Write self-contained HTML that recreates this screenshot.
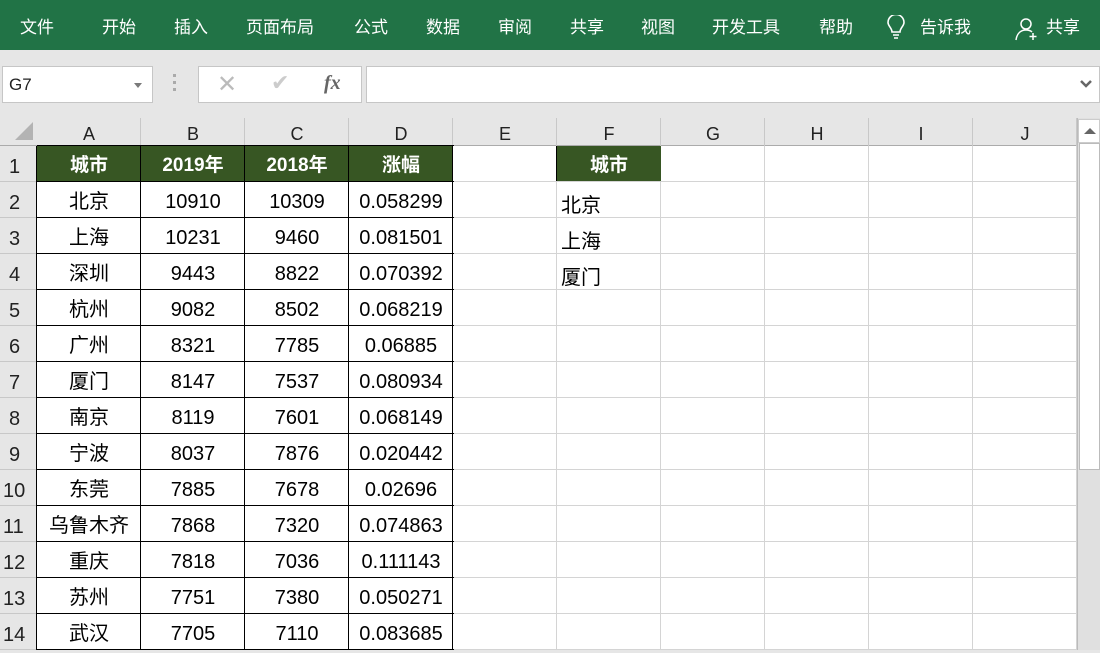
<!DOCTYPE html>
<html><head><meta charset="utf-8"><style>
*{margin:0;padding:0;box-sizing:border-box}
body{width:1100px;height:650px;overflow:hidden;background:#e6e6e6;font-family:"Liberation Sans","Noto Sans CJK SC",sans-serif;position:relative}
.rib{position:absolute;left:0;top:0;width:1100px;height:50px;background:#217346;color:#fff;font-size:17px}
.rib span{position:absolute;top:16px;line-height:24px}
.box{position:absolute;background:#fff;border:1px solid #c6c6c6}
.c{position:absolute;overflow:hidden;white-space:nowrap;font-size:20px;color:#000;height:36px;line-height:36px}
</style></head><body>
<div class="rib">
<span style="left:20px">文件</span><span style="left:102px">开始</span><span style="left:174px">插入</span><span style="left:246px">页面布局</span><span style="left:354px">公式</span><span style="left:426px">数据</span><span style="left:498px">审阅</span><span style="left:570px">共享</span><span style="left:641px">视图</span><span style="left:712px">开发工具</span><span style="left:819px">帮助</span>
<svg style="position:absolute;left:886px;top:15px" width="20" height="26" viewBox="0 0 20 26" fill="none" stroke="#fff" stroke-width="1.6"><path d="M6 17 C6 13 2 11 2 7.5 A8 8 0 0 1 18 7.5 C18 11 14 13 14 17 Z"/><path d="M7 20h6M8 23h4"/></svg>
<span style="left:920px">告诉我</span>
<svg style="position:absolute;left:1015px;top:17px" width="24" height="24" viewBox="0 0 24 24" fill="none" stroke="#fff" stroke-width="1.5"><circle cx="11" cy="7" r="5"/><path d="M1 23 C2 16 6 13 11 13 C14 13 16 14 17 15"/><path d="M18 16v7M14.5 19.5h7"/></svg>
<span style="left:1046px">共享</span>
</div>
<div class="box" style="left:2px;top:66px;width:151px;height:37px;font-size:17px;padding:8px 6px;color:#222">G7<span style="position:absolute;right:10px;top:16px;border:4px solid transparent;border-top:5px solid #7a7a7a"></span></div>
<div style="position:absolute;left:173px;top:74px;width:3px;height:20px;background:repeating-linear-gradient(#aaa 0 3px,transparent 3px 7px)"></div>
<div class="box" style="left:198px;top:66px;width:164px;height:37px">
<span style="position:absolute;left:18px;top:3px;font-size:24px;color:#bbb">✕</span>
<span style="position:absolute;left:72px;top:3px;font-size:22px;color:#ccc">✔</span>
<span style="position:absolute;left:125px;top:5px;font-size:20px;color:#666;font-style:italic;font-weight:bold;font-family:'Liberation Serif',serif">fx</span></div>
<div class="box" style="left:366px;top:66px;width:734px;height:37px">
<svg style="position:absolute;right:6px;top:12px" width="14" height="10"><path d="M2 2l5 5 5-5" fill="none" stroke="#666" stroke-width="2.5"/></svg></div>
<div id="g" style="position:absolute;left:0;top:118px;width:1078px;height:532px;background:#fff"></div>
<div style="position:absolute;left:1077px;top:118px;width:23px;height:532px;background:#e0e0e0;border-left:1px solid #bbb"></div>
<div style="position:absolute;left:1078px;top:119px;width:22px;height:24px;background:#fff;border:1px solid #ccc"><span style="position:absolute;left:5px;top:8px;border:6px solid transparent;border-bottom:6px solid #666;border-top:0"></span></div>
<div style="position:absolute;left:1079px;top:143px;width:21px;height:327px;background:#fff;border:1px solid #bbb"></div>
<script>
var g=document.getElementById('g'),h='';
var cx=[37,141,245,349,453,557,661,765,869,973,1077];
var L='ABCDEFGHIJ';
h+='<div style="position:absolute;left:0;top:0;width:1078px;height:28px;background:#e6e6e6;border-bottom:1px solid #ababab"></div>';
h+='<div style="position:absolute;left:0;top:28px;width:37px;height:504px;background:#e6e6e6;border-right:1px solid #ababab"></div>';
h+='<div style="position:absolute;left:15px;top:4px;width:0;height:0;border-left:18px solid transparent;border-bottom:18px solid #b3b3b3"></div>';
for(var i=0;i<10;i++){h+='<div class="c" style="left:'+cx[i]+'px;top:-2px;width:104px;text-align:center;font-size:18px;color:#222">'+L[i]+'</div>';
h+='<div style="position:absolute;left:'+(cx[i+1]-1)+'px;top:0;width:1px;height:28px;background:#c8c8c8"></div>';
h+='<div style="position:absolute;left:'+(cx[i+1]-1)+'px;top:28px;width:1px;height:504px;background:#d4d4d4"></div>';}
for(var r=1;r<=14;r++){var y=28+(r-1)*36;
h+='<div style="position:absolute;left:37px;top:'+(y+35)+'px;width:1041px;height:1px;background:#d4d4d4"></div>';
h+='<div style="position:absolute;left:0;top:'+(y+35)+'px;width:37px;height:1px;background:#c8c8c8"></div>';
h+='<div class="c" style="left:'+(r<10?9:3)+'px;top:'+(y+3)+'px;font-size:20px;color:#222">'+r+'</div>';}
var d=[['城市','2019年','2018年','涨幅'],['北京',10910,10309,'0.058299'],['上海',10231,9460,'0.081501'],['深圳',9443,8822,'0.070392'],['杭州',9082,8502,'0.068219'],['广州',8321,7785,'0.06885'],['厦门',8147,7537,'0.080934'],['南京',8119,7601,'0.068149'],['宁波',8037,7876,'0.020442'],['东莞',7885,7678,'0.02696'],['乌鲁木齐',7868,7320,'0.074863'],['重庆',7818,7036,'0.111143'],['苏州',7751,7380,'0.050271'],['武汉',7705,7110,'0.083685']];
h+='<div style="position:absolute;left:37px;top:28px;width:416px;height:35px;background:#375623"></div>';
h+='<div style="position:absolute;left:557px;top:28px;width:104px;height:35px;background:#375623"></div>';
for(var r=0;r<14;r++){var y=28+r*36;for(var c=0;c<4;c++){
h+='<div class="c" style="left:'+cx[c]+'px;top:'+(y+2)+'px;width:104px;text-align:center;'+(r==0?'color:#fff;font-weight:bold;font-size:19px':'')+'">'+d[r][c]+'</div>';}}
for(var r=0;r<=14;r++){h+='<div style="position:absolute;left:37px;top:'+(28+r*36-1)+'px;width:417px;height:1px;background:#000"></div>';}
for(var c=0;c<5;c++){h+='<div style="position:absolute;left:'+(cx[c]-1)+'px;top:28px;width:1px;height:504px;background:#000"></div>';}
h+='<div style="position:absolute;left:556px;top:28px;width:1px;height:35px;background:#000"></div>';
h+='<div class="c" style="left:557px;top:30px;width:104px;text-align:center;color:#fff;font-weight:bold;font-size:19px">城市</div>';
var f=['北京','上海','厦门'];for(var i=0;i<3;i++)h+='<div class="c" style="left:561px;top:'+(28+36*(i+1)+6)+'px">'+f[i]+'</div>';
g.innerHTML=h;
</script>
</body></html>
